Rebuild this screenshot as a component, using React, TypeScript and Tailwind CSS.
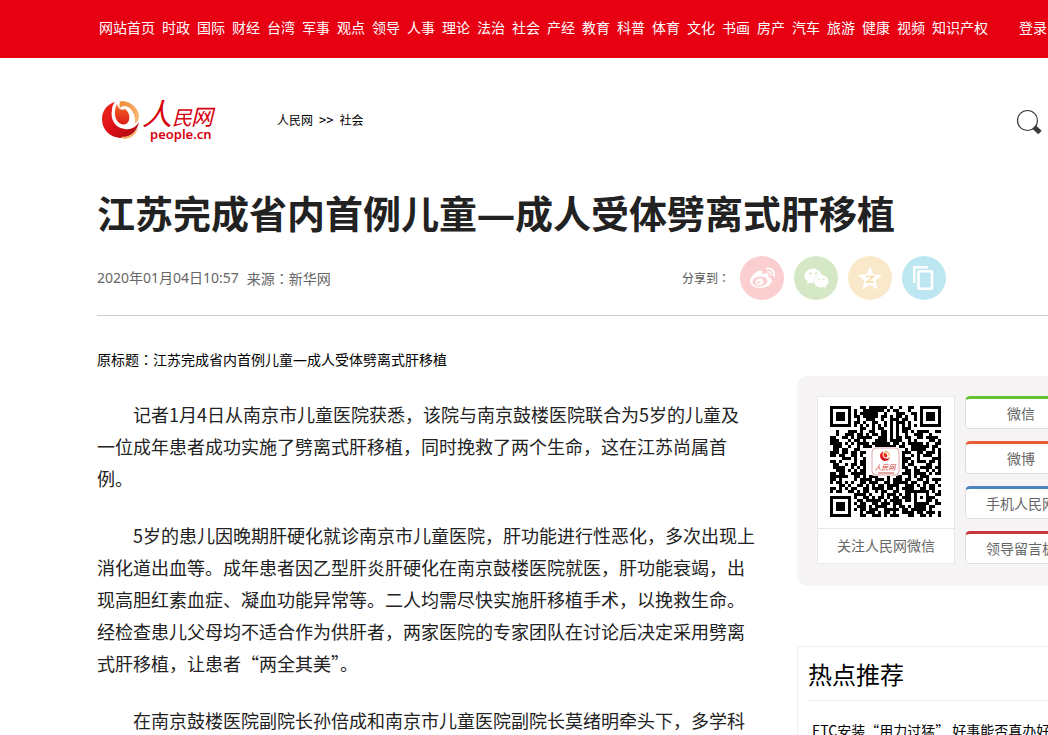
import React from 'react';
import { FaWeibo, FaWeixin } from 'react-icons/fa';

const NAV = ['网站首页', '时政', '国际', '财经', '台湾', '军事', '观点', '领导', '人事', '理论', '法治', '社会', '产经', '教育', '科普', '体育', '文化', '书画', '房产', '汽车', '旅游', '健康', '视频', '知识产权'];

const LINKS = [
  { name: '微信', color: 'border-t-[#64c332]' },
  { name: '微博', color: 'border-t-[#e85d33]' },
  { name: '手机人民网', color: 'border-t-[#4f83bd]' },
  { name: '领导留言板', color: 'border-t-[#c8373a]' },
];

const PARAGRAPHS = [
  '记者1月4日从南京市儿童医院获悉，该院与南京鼓楼医院联合为5岁的儿童及一位成年患者成功实施了劈离式肝移植，同时挽救了两个生命，这在江苏尚属首例。',
  '5岁的患儿因晚期肝硬化就诊南京市儿童医院，肝功能进行性恶化，多次出现上消化道出血等。成年患者因乙型肝炎肝硬化在南京鼓楼医院就医，肝功能衰竭，出现高胆红素血症、凝血功能异常等。二人均需尽快实施肝移植手术，以挽救生命。经检查患儿父母均不适合作为供肝者，两家医院的专家团队在讨论后决定采用劈离式肝移植，让患者“两全其美”。',
  '在南京鼓楼医院副院长孙倍成和南京市儿童医院副院长莫绪明牵头下，多学科',
];

// 37 x 37 modules, the three finder squares are drawn on top
const QR_ROWS = [
  '..........##.######.#..#..##.........',
  '........#..#######.#.##...#..........',
  '........#.######..#...###..##........',
  '........##.#####.##.#.##.#..#........',
  '.........#..###..#..###.##..#........',
  '........##.#..##..#.#.###.#..........',
  '........#.#.#.#.#.#.#.#.#.#.#........',
  '..........##..#.##..#.#.###..........',
  '..#...###.#..##..##.#.#.##.#.####..##',
  '..#..###.##.#.##.##.#.#..#..###..#...',
  '##..##.#.#####..###.#.##.##..##.####.',
  '###...#.##.#...####.####..#.#....##.#',
  '####.#.#.####.######.##.#.#####.#..##',
  '.###..#..#.###.#######.##..######.##.',
  '.##.##..##...........#...#.#####..#.#',
  '###.##.##.##............###..##.###.#',
  '##.##..##.#.............#..#.#.###..#',
  '....###.#..#............###..#....###',
  '##.#....#.##............##.#.###.##.#',
  '.##..#.##.##............#.##....##..#',
  '.####..#.#.#............##..#.####.##',
  '..###.#.#.##.............##.##..#.#.#',
  '##.##..#####............###.####.#.##',
  '######..##.#.###...#..##..#.#.###....',
  '##.#....#.####.###.#.###.##..##.#.###',
  '#.##.#.#..##.###..##.#####.##..##..#.',
  '...##.#..##.#.#.##.####..###.#.#.##.#',
  '##.#.#.##..##.####.##.#.####..##.##..',
  '#.##..##.#.##..#.##..##..########.#.#',
  '........####.#...#.###.#.##.#...#..##',
  '........#..##.#.##.#.##.###.#.#.###..',
  '.........##.#####.#.####.##.#...##.#.',
  '........#.##..##.###.###....#####..##',
  '.........###.#.####..#.##.#.####.##..',
  '........#.##.###..#####.##.#####.#...',
  '..........#.###.#.##.#..####.##.###.#',
  '..........##..###.#.###...##..##.#..#',
];

const Ball: React.FC = () => (
  <>
    <defs>
      <linearGradient id="ballRed" x1="0" y1="0" x2="1" y2="1">
        <stop offset="0" stopColor="#ee2a1c" />
        <stop offset="0.5" stopColor="#dc0f18" />
        <stop offset="1" stopColor="#a00b10" />
      </linearGradient>
      <linearGradient id="ballCore" x1="0.5" y1="0" x2="0.5" y2="1">
        <stop offset="0" stopColor="#f26a21" />
        <stop offset="1" stopColor="#dd1a17" />
      </linearGradient>
      <linearGradient id="ballGold" x1="0" y1="0" x2="1" y2="1">
        <stop offset="0" stopColor="#ee8a36" />
        <stop offset="1" stopColor="#f8c07c" />
      </linearGradient>
    </defs>
    <path d="M13 1C5 3 0 10 0 18c0 11 8 18 18 19 10 0 17-6 19-16-3 5-8 8-14 7C13 27 8 18 10 9c0-3 1-6 3-8z" fill="url(#ballRed)" />
    <path d="M15 3c-3 6-3 13 1 18 4 4 10 3 11-2 1-4 0-8-4-11-3 2-7 0-8-5z" fill="url(#ballCore)" />
    <path d="M19 0c8 0 16 5 18 14 0 4-1 6-4 9 1-8-3-17-10-18-3 0-4 1-5 2-1-3-1-5 1-7z" fill="url(#ballGold)" />
    <path d="M19 36c7 0 13-3 17-9-2 7-8 11-14 11-1 0-2-1-3-2z" fill="#f6b26c" />
  </>
);

const Logo: React.FC = () => (
  <svg className="h-12 w-[120px] shrink-0" viewBox="0 0 120 48" role="img" aria-label="人民网">
    <g transform="translate(5 5)"><Ball /></g>
    <g className="font-['Noto_Sans_CJK_SC',sans-serif] italic" fill="#d7000f">
      <text x="45" y="29" fontSize="30">人</text>
      <text x="75" y="29" fontSize="20">民</text>
      <text x="94" y="29" fontSize="22">网</text>
    </g>
    <text x="53" y="43" fontSize="13" fontWeight="600" fill="#d7000f" className="font-['Noto_Sans',sans-serif]">people.cn</text>
  </svg>
);

const Finder: React.FC<{ x: number; y: number }> = ({ x, y }) => (
  <>
    <rect x={x} y={y} width="7" height="7" fill="#000" />
    <rect x={x + 1} y={y + 1} width="5" height="5" fill="#fff" />
    <rect x={x + 2} y={y + 2} width="3" height="3" fill="#000" />
  </>
);

const QrCode: React.FC = () => (
  <svg className="size-[111px]" viewBox="0 0 111 111" role="img" aria-label="二维码">
    <g transform="scale(3)" shapeRendering="crispEdges">
      {QR_ROWS.map((row, y) => row.split('').map((c, x) => c === '#' && <rect key={`${x}-${y}`} x={x} y={y} width="1" height="1" />))}
      <Finder x={0} y={0} />
      <Finder x={30} y={0} />
      <Finder x={0} y={30} />
    </g>
    <rect x="41" y="41" width="29" height="29" rx="4" fill="#fff" />
    <rect x="42" y="42" width="27" height="27" rx="4" fill="#fff" stroke="#dfa5a5" />
    <g transform="translate(50 45) scale(0.27)"><Ball /></g>
    <text x="55" y="64" textAnchor="middle" fontSize="7" fill="#d03a35" className="font-['Noto_Sans_CJK_SC',sans-serif] italic">人民网</text>
    <path d="M48 67h16" stroke="#d98a86" strokeWidth="1.5" />
  </svg>
);

const Colon: React.FC = () => <span className="font-['Noto_Sans_CJK_TC',sans-serif]">：</span>;

// full-width dash, the CJK face draws it too short
const Title: React.FC = () => (
  <>江苏完成省内首例儿童<span className="font-['Noto_Sans',sans-serif] leading-none">—</span>成人受体劈离式肝移植</>
);

const Share: React.FC = () => (
  <div className="flex items-center gap-2.5 text-white">
    <span className="text-xs text-[#555]">分享到<Colon /></span>
    <button aria-label="微博" className="flex size-11 items-center justify-center rounded-full bg-[#fbcfd0]"><FaWeibo size={25} /></button>
    <button aria-label="微信" className="flex size-11 items-center justify-center rounded-full bg-[#d5e8c6]"><FaWeixin size={25} /></button>
    <button aria-label="QQ空间" className="flex size-11 items-center justify-center rounded-full bg-[#f9e9ca]">
      <svg className="size-6" viewBox="0 0 24 24">
        <path d="M12 .5l3.300 7.800 8.700.700-6.500 5.800 2.300 8.700-7.800-4.500-7.800 4.500 2.300-8.700L0 9l8.700-.7z" fill="#fff" />
        <path d="M8 10.500h7.500L9 16h7" fill="none" stroke="#f6dca8" strokeWidth="1.500" />
      </svg>
    </button>
    <button aria-label="复制" className="flex size-11 items-center justify-center rounded-full bg-[#bce7f1]">
      <svg className="size-6" viewBox="0 0 24 24" fill="none" stroke="#fff" strokeWidth="2.500">
        <path d="M2.300 17V1.300H16" />
        <rect x="6.500" y="5.300" width="13.500" height="17.500" rx="1" />
      </svg>
    </button>
  </div>
);

const App: React.FC = () => (
  <div className="h-screen overflow-hidden bg-white font-['Noto_Sans_CJK_SC','Noto_Sans',sans-serif] text-[#222]">
    <div className="min-w-[1200px]">
      <nav className="flex h-[58px] items-center bg-[#e60012] pb-1 pl-[99px] text-sm text-white">
        <div className="flex gap-[7px]">
          {NAV.map(n => <a key={n} href="#">{n}</a>)}
        </div>
        <a href="#" className="ml-[31px]">登录</a>
      </nav>

      <div className="pl-[97px]">
        <header className="flex items-center pt-[38px]">
          <Logo />
          <div className="ml-[60px] flex gap-1.5 text-xs text-black">
            <a href="#">人民网</a>
            <span className="font-['DejaVu_Sans_Mono',monospace]">&gt;&gt;</span>
            <a href="#">社会</a>
          </div>
          <button aria-label="搜索" className="mt-1 ml-[653px]">
            <svg className="size-[26px]" viewBox="0 0 26 26">
              <circle cx="11.500" cy="11.500" r="10" fill="none" stroke="#3a3a3a" strokeWidth="1.200" />
              <path d="M18 18l6 5.500" stroke="#3a3a3a" strokeWidth="5" />
            </svg>
          </button>
        </header>

        <h1 className="mt-[39px] text-[38px] leading-[58px] font-bold"><Title /></h1>
        <div className="flex items-center border-b border-[#ccc] pt-[15px] pb-[15px]">
          <p className="flex w-[585px] gap-2 text-sm text-[#666]">
            <span className="font-['Noto_Sans','Noto_Sans_CJK_SC',sans-serif]">2020年01月04日10:57</span>
            <span>来源<Colon /><a href="#">新华网</a></span>
          </p>
          <Share />
        </div>

        <div className="flex gap-[41px]">
          <article className="w-[659px] shrink-0 pt-[33px]">
            <p className="text-sm text-black">原标题<Colon /><Title /></p>
            <div className="mt-[29px] flex flex-col gap-[25px] text-lg leading-8">
              {PARAGRAPHS.map((p, i) => <p key={i} className="indent-[2em]">{p}</p>)}
            </div>
          </article>

          <aside className="w-[300px] shrink-0 pt-[60px]">
            <div className="flex gap-2.5 rounded-[10px] bg-[#f6f4f5] px-5 pt-5 pb-[22px]">
              <div className="w-[138px] border border-[#e8e8e8] bg-white text-center text-sm text-[#666]">
                <div className="flex pt-[9px] pb-[11px] pl-3"><QrCode /></div>
                <p className="border-t border-[#e8e8e8] leading-[33px]">关注人民网微信</p>
              </div>
              <div className="flex flex-1 flex-col gap-3">
                {LINKS.map(l => (
                  <a key={l.name} href="#" className={`rounded-[5px] border border-t-[3px] border-[#ddd] bg-white text-center text-sm leading-[29px] text-[#666] ${l.color}`}>{l.name}</a>
                ))}
              </div>
            </div>

            <section className="mt-[60px] border border-[#eee] px-2.5">
              <h2 className="border-b border-[#eee] text-2xl leading-[53px] text-black">热点推荐</h2>
              <ul className="pt-[15px] pl-1 text-sm whitespace-nowrap text-black">
                <li><a href="#" className="leading-7">ETC安装“用力过猛” 好事能否真办好</a></li>
              </ul>
            </section>
          </aside>
        </div>
      </div>
    </div>
  </div>
);

export default App;
